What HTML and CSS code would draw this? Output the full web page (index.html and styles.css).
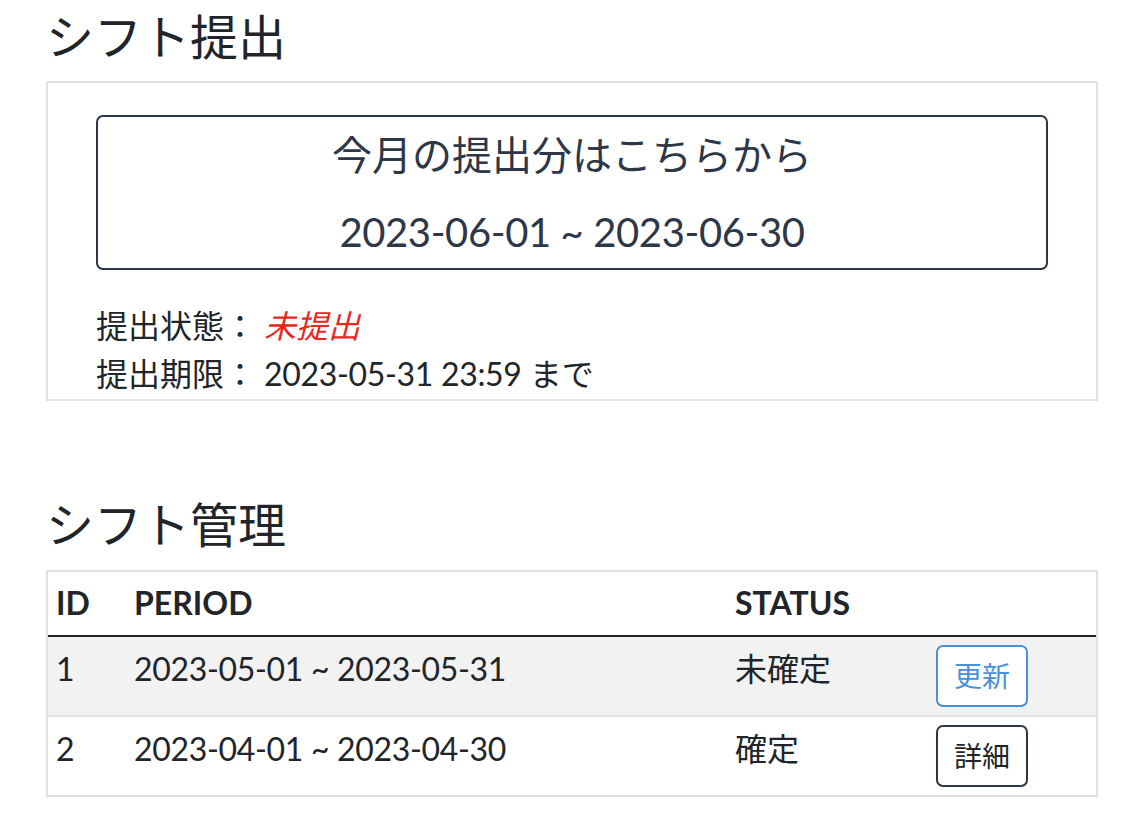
FILE: index.html
```html
<!DOCTYPE html>
<html lang="ja">
<head>
<meta charset="utf-8">
<title>シフト</title>
<link rel="stylesheet" href="styles.css">
</head>
<body>
<main class="page">
  <section class="section section-submit">
    <h2 class="section-title">シフト提出</h2>
    <div class="panel">
      <a class="period-card" href="#">
        <span class="period-line period-label">今月の提出分はこちらから</span>
        <span class="period-line period-range num">2023-06-01 ~ 2023-06-30</span>
      </a>
      <dl class="info">
        <div class="info-row">
          <dt>提出状態：</dt>
          <dd class="status-unsubmitted">未提出</dd>
        </div>
        <div class="info-row">
          <dt>提出期限：</dt>
          <dd><span class="num">2023-05-31 23:59</span> まで</dd>
        </div>
      </dl>
    </div>
  </section>

  <section class="section section-manage">
    <h2 class="section-title">シフト管理</h2>
    <div class="table-wrap">
      <table class="shift-table">
        <colgroup>
          <col class="col-id">
          <col class="col-period">
          <col class="col-status">
          <col class="col-action">
        </colgroup>
        <thead>
          <tr>
            <th>ID</th>
            <th>PERIOD</th>
            <th>STATUS</th>
            <th></th>
          </tr>
        </thead>
        <tbody>
          <tr class="row-shaded">
            <td>1</td>
            <td class="num">2023-05-01 ~ 2023-05-31</td>
            <td>未確定</td>
            <td><button class="btn btn-primary" type="button">更新</button></td>
          </tr>
          <tr>
            <td>2</td>
            <td class="num">2023-04-01 ~ 2023-04-30</td>
            <td>確定</td>
            <td><button class="btn btn-dark" type="button">詳細</button></td>
          </tr>
        </tbody>
      </table>
    </div>
  </section>
</main>
</body>
</html>
```

FILE: styles.css
```css
* {
  box-sizing: border-box;
}

html, body {
  margin: 0;
  padding: 0;
  background: #ffffff;
}

body {
  font-family: "Lato", "Noto Sans CJK JP", sans-serif;
  font-size: 32px;
  line-height: 1.5;
  color: #212529;
}

.page {
  margin-left: 46px;
  width: 1052px;
}

.num {
  letter-spacing: -0.01em;
}

.section-title {
  font-size: 48px;
  font-weight: 400;
  line-height: 1.2;
  margin: 8px 0 15px 0;
  color: #212529;
}

.section-manage .section-title {
  margin: 95px 0 17px 0;
}

.panel {
  border: 2px solid #dee2e6;
  padding: 32px 48px 1px 48px;
}

.period-card {
  display: flex;
  flex-direction: column;
  align-items: center;
  gap: 17px;
  border: 2px solid #2d3748;
  border-radius: 7px;
  padding: 8px 0 6px 0;
  color: #2d3748;
  text-decoration: none;
  font-size: 40px;
  line-height: 60px;
}

.info {
  margin: 32px 0 0 0;
}

.info-row {
  display: flex;
}

.info dt,
.info dd {
  margin: 0;
}

.info dt {
  margin-right: 8px;
}

.status-unsubmitted {
  color: #e8271f;
  font-style: italic;
}

.table-wrap {
  border: 2px solid #dee2e6;
}

.shift-table {
  width: 100%;
  border-collapse: collapse;
  table-layout: fixed;
}

.col-id { width: 78px; }
.col-period { width: 601px; }
.col-status { width: 201px; }
.col-action { width: auto; }

.shift-table th {
  text-align: left;
  font-weight: 700;
  padding: 7px 8px 8px 8px;
  vertical-align: top;
}

.shift-table thead tr {
  border-bottom: 2px solid #212529;
}

.shift-table td {
  padding: 8px;
  vertical-align: top;
}

.shift-table tbody tr + tr {
  border-top: 2px solid #dee2e6;
}

.row-shaded {
  background: #f2f2f2;
}

.btn {
  font-family: "Lato", "Noto Sans CJK JP", sans-serif;
  font-size: 28px;
  line-height: 42px;
  padding: 8px 16px;
  border-radius: 7px;
  background: #ffffff;
  border: 2px solid;
  cursor: pointer;
  display: inline-block;
}

.btn-primary {
  color: #4a90d9;
  border-color: #4a90d9;
}

.btn-dark {
  color: #212529;
  border-color: #2d3748;
}
```
